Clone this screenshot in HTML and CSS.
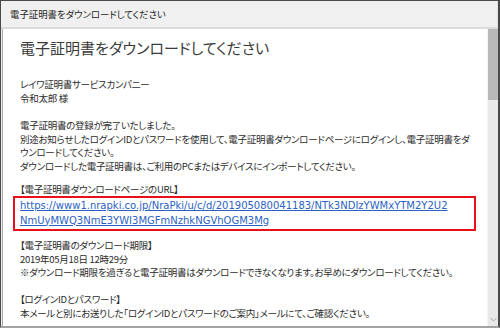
FILE: index.html
```html
<!DOCTYPE html>
<html lang="ja">
<head>
<meta charset="utf-8">
<title>電子証明書をダウンロードしてください</title>
<link rel="stylesheet" href="styles.css">
</head>
<body>
<div class="window">
  <div class="titlebar">電子証明書をダウンロードしてください</div>
  <div class="main">
    <div class="content">
      <h1 class="heading">電子証明書をダウンロードしてください</h1>
      <p class="para p-to">レイワ証明書サービスカンパニー<br>令和太郎 様</p>
      <p class="para p-msg">電子証明書の登録が完了いたしました。<br>別途お知らせしたログインIDとパスワードを使用して、電子証明書ダウンロードページにログインし、電子証明書をダ<br>ウンロードしてください。<br>ダウンロードした電子証明書は、ご利用のPCまたはデバイスにインポートしてください。</p>
      <p class="para p-url">【電子証明書ダウンロードページのURL】</p>
      <div class="linkbox"><a class="link" href="#">https://www1.nrapki.co.jp/NraPki/u/c/d/201905080041183/NTk3NDIzYWMxYTM2Y2U2<br>NmUyMWQ3NmE3YWI3MGFmNzhkNGVhOGM3Mg</a></div>
      <p class="para p-limit">【電子証明書のダウンロード期限】<br>2019年05月18日 12時29分<br>※ダウンロード期限を過ぎると電子証明書はダウンロードできなくなります。お早めにダウンロードしてください。</p>
      <p class="para p-login">【ログインIDとパスワード】<br>本メールと別にお送りした「ログインIDとパスワードのご案内」メールにて、ご確認ください。</p>
    </div>
    <div class="scrollbar">
      <div class="thumb"></div>
      <div class="track">
        <svg class="chevron" width="7" height="5" viewBox="0 0 7 5"><path d="M0.5 1 L3.5 4 L6.5 1" fill="none" stroke="#a6a6a6" stroke-width="1"/></svg>
      </div>
    </div>
  </div>
</div>
</body>
</html>
```

FILE: styles.css
```css
html, body {
  margin: 0;
  padding: 0;
  background: #ffffff;
}
body {
  width: 500px;
  height: 328px;
  overflow: hidden;
  font-family: "Noto Sans CJK JP", "Noto Sans", sans-serif;
  font-feature-settings: "palt" 1;
  color: #2b2b2b;
}
.window {
  box-sizing: border-box;
  width: 500px;
  height: 328px;
  border-top: 1px solid #4a4a4a;
  border-left: 1px solid #4a4a4a;
  border-right: 2px solid #4a4a4a;
  border-bottom: 2px solid #a3a3a3;
  display: flex;
  flex-direction: column;
  background: #f0f0f0;
}
.titlebar {
  height: 26px;
  line-height: 26px;
  padding-left: 9px;
  font-size: 9.4px;
  color: #1e1e1e;
  background: #f0f0f0;
  border-bottom: 2px solid #dcdcdc;
  border-right: 1px solid #e2e2e2;
  white-space: nowrap;
}
.main {
  flex: 1;
  display: flex;
  min-height: 0;
  padding-left: 1px;
  background: #f0f0f0;
}
.content {
  flex: 1;
  min-width: 0;
  background: #ffffff;
  border-left: 1px solid #a8a8a8;
  padding: 9px 0 0 17px;
  overflow: hidden;
}
.heading {
  margin: 0;
  font-weight: normal;
  font-size: 15px;
  line-height: 20px;
  color: #3a3a3a;
  white-space: nowrap;
}
.para {
  margin: 0;
  font-size: 9.5px;
  letter-spacing: -0.28px;
  line-height: 13.5px;
  white-space: nowrap;
}
.p-to { margin-top: 20px; }
.p-msg { margin-top: 14px; }
.p-url { margin-top: 9.5px; }
.p-limit { margin-top: 8px; }
.p-login { margin-top: 13.5px; }
.linkbox {
  margin-left: -7px;
  width: 454px;
  border: 2px solid #e8101a;
  padding: 0 0 2px 5px;
  line-height: 13.5px;
  font-size: 10px;
}
.link {
  font-family: "DejaVu Sans", sans-serif;
  font-size: 10px;
  line-height: 13.5px;
  color: #2a62c4;
  text-decoration: underline;
  white-space: nowrap;
}
.scrollbar {
  width: 10px;
  display: flex;
  flex-direction: column;
  background: #e9e9e9;
  border-left: 1px solid #f4f4f4;
}
.thumb {
  height: 71px;
  background: #b9b9b9;
}
.track {
  flex: 1;
  display: flex;
  flex-direction: column;
  justify-content: flex-end;
  align-items: center;
  padding-bottom: 4px;
}
.chevron {
  display: block;
}
```
